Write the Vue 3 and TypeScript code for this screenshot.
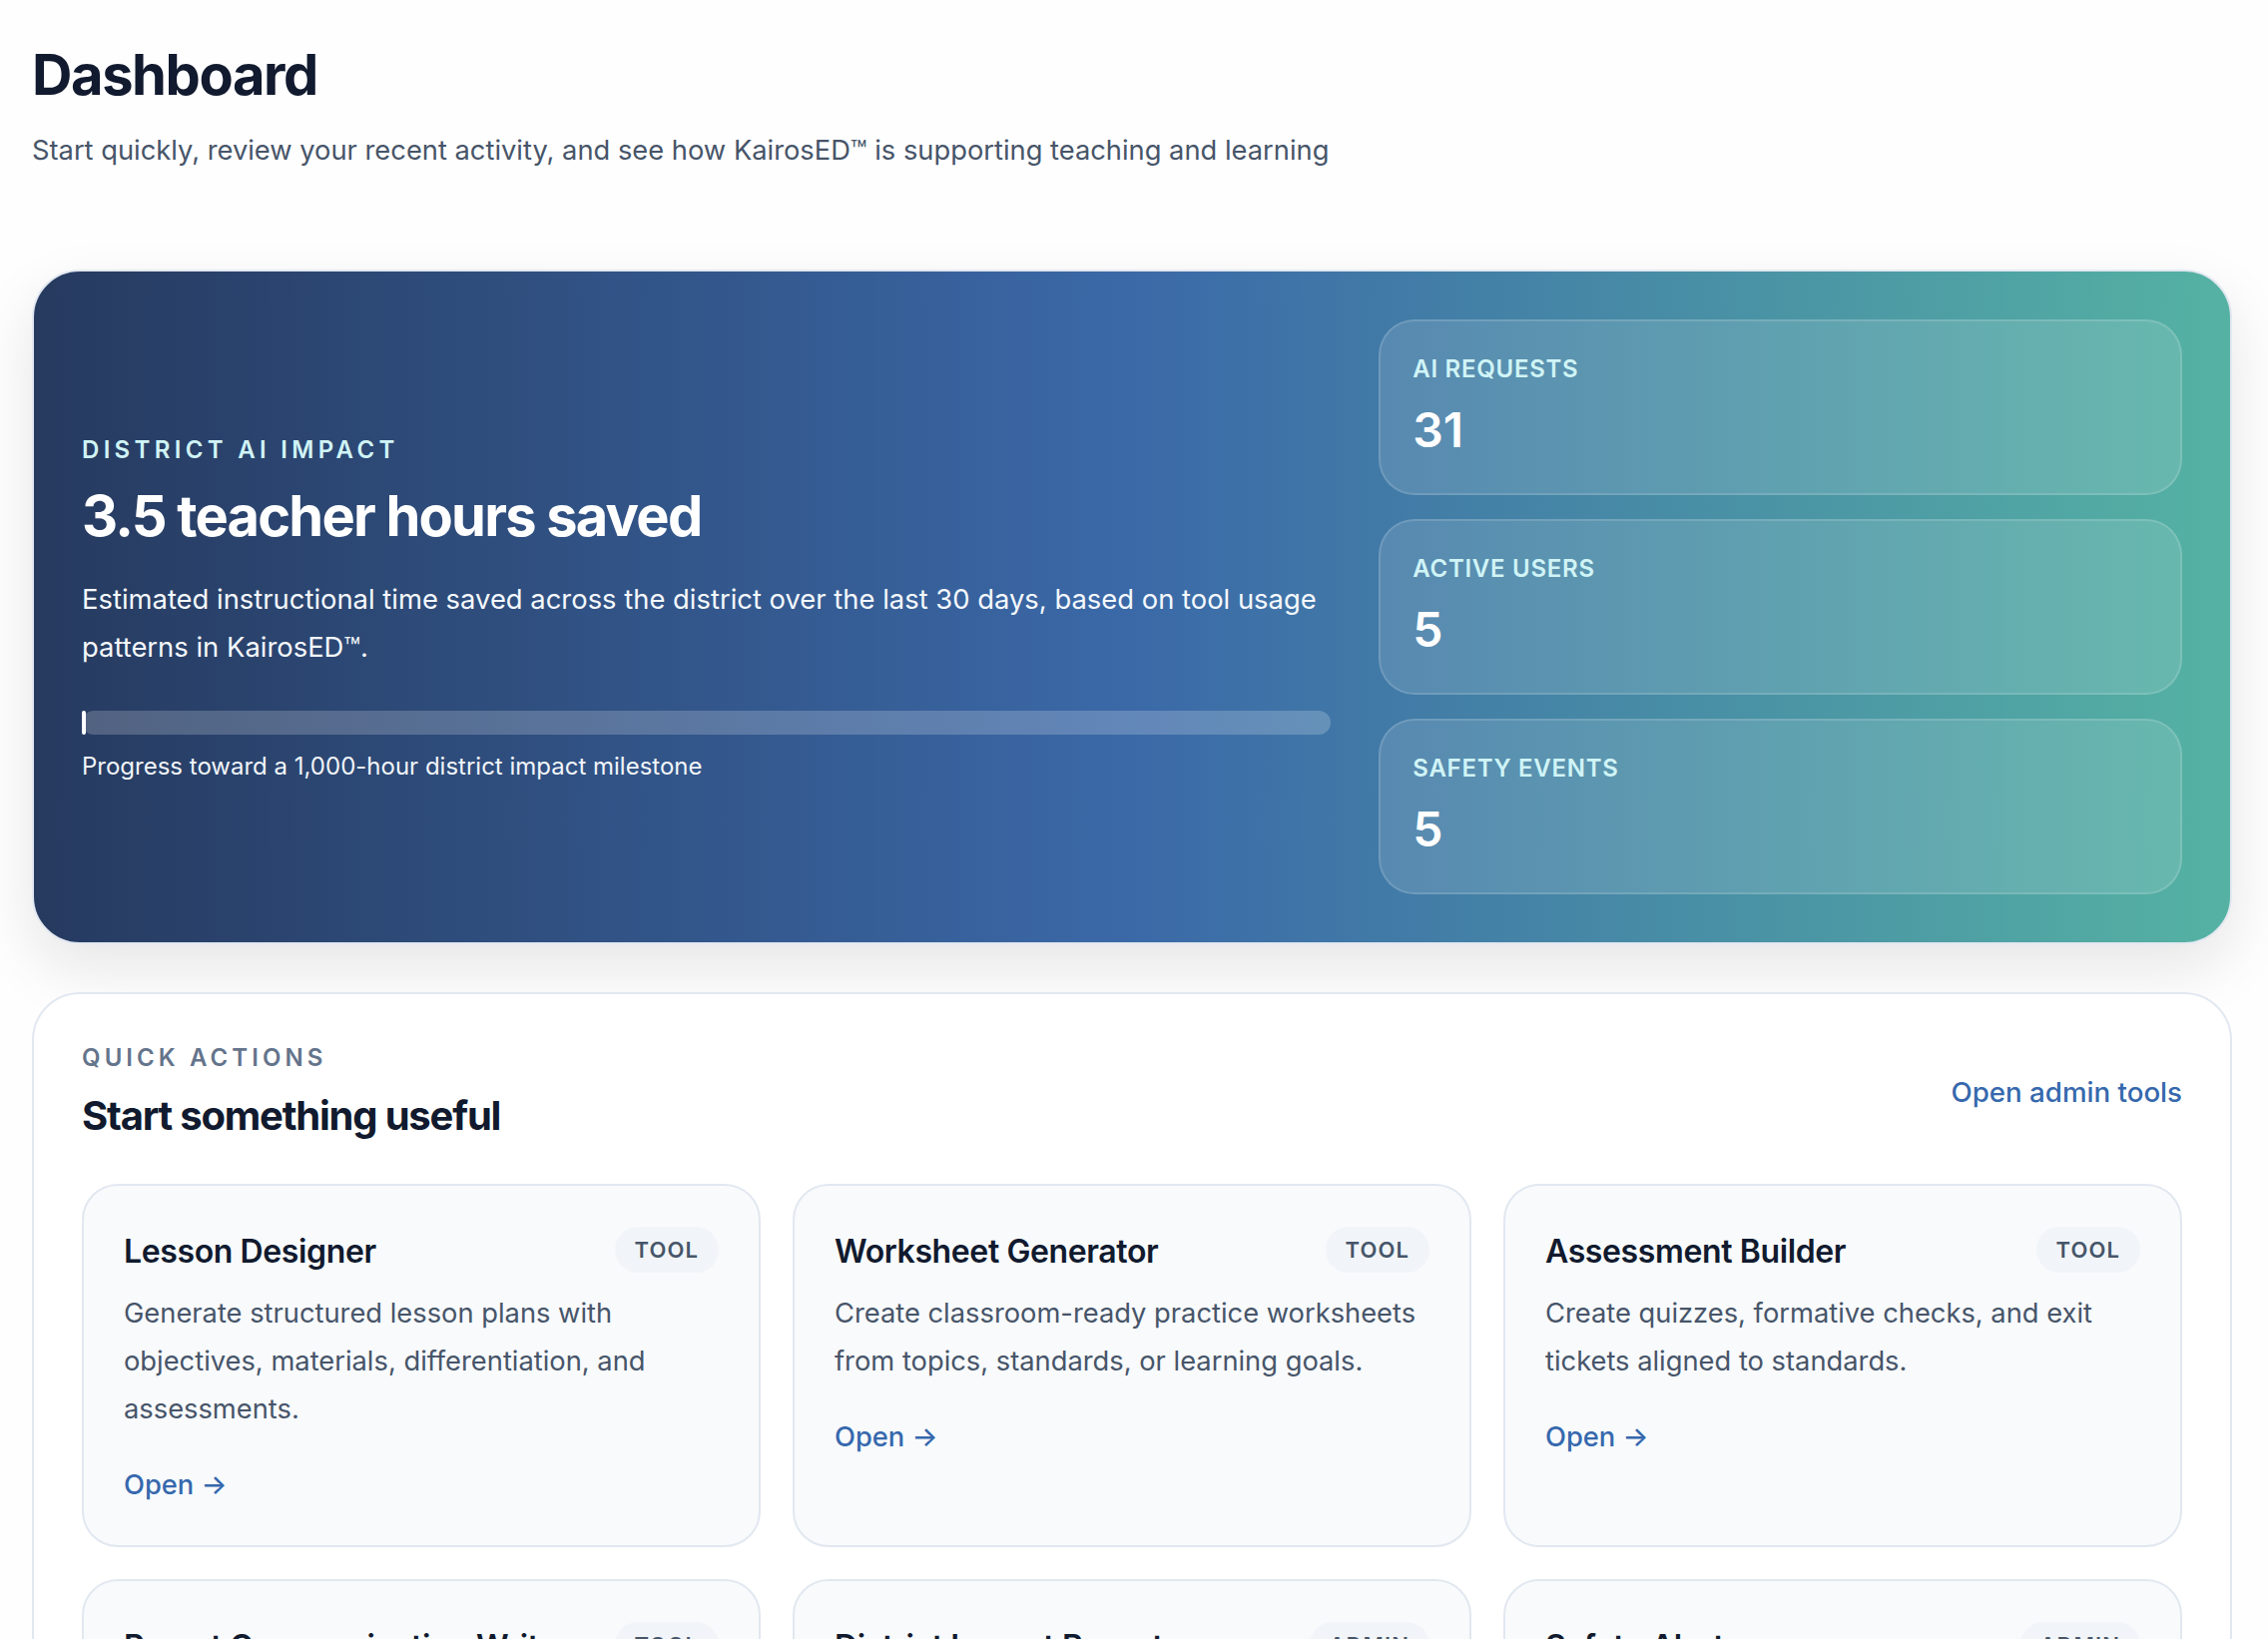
<script setup lang="ts">
interface Action { title: string; tag: string; text: string }
const stats = [
  { label: 'AI REQUESTS', value: '31' },
  { label: 'ACTIVE USERS', value: '5' },
  { label: 'SAFETY EVENTS', value: '5' },
]
const actions: Action[] = [
  { title: 'Lesson Designer', tag: 'TOOL', text: 'Generate structured lesson plans with objectives, materials, differentiation, and assessments.' },
  { title: 'Worksheet Generator', tag: 'TOOL', text: 'Create classroom-ready practice worksheets from topics, standards, or learning goals.' },
  { title: 'Assessment Builder', tag: 'TOOL', text: 'Create quizzes, formative checks, and exit tickets aligned to standards.' },
  { title: 'Parent Communication Writer', tag: 'TOOL', text: 'Draft clear, family-friendly messages and updates for parents.' },
  { title: 'District Impact Report', tag: 'ADMIN', text: 'Review district usage and estimated instructional time saved.' },
  { title: 'Safety Alerts', tag: 'ADMIN', text: 'Review flagged activity and safety events across the district.' },
]
</script>

<template>
  <div class="page">
    <header class="head">
      <h1>Dashboard</h1>
      <p>Start quickly, review your recent activity, and see how KairosED™ is supporting teaching and learning</p>
    </header>

    <section class="hero">
      <div class="hero-main">
        <div class="hero-eyebrow">DISTRICT AI IMPACT</div>
        <h2>3.5 teacher hours saved</h2>
        <p class="hero-text">Estimated instructional time saved across the district over the last 30 days, based on tool usage patterns in KairosED™.</p>
        <div class="bar"><div class="bar-fill"></div></div>
        <div class="bar-caption">Progress toward a 1,000-hour district impact milestone</div>
      </div>
      <div class="stats">
        <div v-for="s in stats" :key="s.label" class="stat">
          <div class="stat-label">{{ s.label }}</div>
          <div class="stat-value">{{ s.value }}</div>
        </div>
      </div>
    </section>

    <section class="panel">
      <div class="panel-head">
        <div>
          <div class="panel-eyebrow">QUICK ACTIONS</div>
          <h3>Start something useful</h3>
        </div>
        <a class="admin-link">Open admin tools</a>
      </div>
      <div class="grid">
        <article v-for="a in actions" :key="a.title" class="card">
          <div class="card-top">
            <h4>{{ a.title }}</h4>
            <span class="tag">{{ a.tag }}</span>
          </div>
          <p>{{ a.text }}</p>
          <a class="open">Open →</a>
        </article>
      </div>
    </section>
  </div>
</template>

<style>
html, body { margin: 0; background: #fff; }
</style>

<style scoped>
.page {
  box-sizing: border-box;
  height: 1642px;
  overflow: hidden;
  padding: 32px 36px 0 32px;
  font-family: Inter, "Liberation Sans", sans-serif;
  background: #fefefe;
}
.head { height: 231px; }
h1 {
  margin: 7px 0 0;
  font-size: 56px;
  line-height: 72px;
  font-weight: 700;
  letter-spacing: -0.025em;
  color: #111a2e;
}
.head p {
  margin: 18px 0 0;
  font-size: 27.3px;
  line-height: 44px;
  color: #475569;
}
.hero {
  box-sizing: border-box;
  display: grid;
  grid-template-columns: 1.555fr 1fr;
  gap: 48px;
  align-items: center;
  padding: 48px;
  border: 2px solid #e2e8f0;
  border-radius: 48px;
  background: linear-gradient(90deg, #263a5f 0%, #3b69a8 50%, #55b2a3 100%);
  box-shadow: 0 24px 60px rgba(15, 23, 42, 0.1);
  color: #fff;
}
.hero-main { padding-top: 5px; }
.hero-eyebrow {
  font-size: 24px;
  line-height: 32px;
  font-weight: 600;
  letter-spacing: 0.18em;
  color: #d0f4f6;
}
.hero h2 {
  margin: 12px 0 0;
  font-size: 56px;
  line-height: 76px;
  font-weight: 700;
  letter-spacing: -0.032em;
}
.hero-text {
  margin: 21px 0 0;
  font-size: 27.4px;
  line-height: 48px;
  color: #f4f8fc;
}
.bar {
  margin-top: 40px;
  height: 24px;
  border-radius: 12px;
  background: rgba(255, 255, 255, 0.2);
}
.bar-fill { width: 4px; height: 100%; border-radius: 2px; background: #fff; }
.bar-caption {
  margin-top: 14px;
  font-size: 24px;
  line-height: 36px;
  color: #f1f5f9;
}
.stats { display: flex; flex-direction: column; gap: 24px; }
.stat {
  box-sizing: border-box;
  height: 176px;
  padding: 32px;
  border: 2px solid rgba(255, 255, 255, 0.14);
  border-radius: 36px;
  background: rgba(255, 255, 255, 0.12);
}
.stat-label {
  font-size: 24px;
  line-height: 32px;
  font-weight: 600;
  letter-spacing: 0.03em;
  color: #d0f4f6;
}
.stat-value {
  margin-top: 15px;
  font-size: 48px;
  line-height: 60px;
  font-weight: 600;
}
.panel {
  box-sizing: border-box;
  margin-top: 48px;
  padding: 48px;
  border: 2px solid #e2e8f0;
  border-radius: 48px;
  background: #fff;
}
.panel-head {
  display: flex;
  justify-content: space-between;
  align-items: center;
  margin-bottom: 43px;
}
.panel-eyebrow {
  font-size: 24px;
  line-height: 32px;
  font-weight: 600;
  letter-spacing: 0.17em;
  color: #64748b;
}
h3 {
  margin: 17px 0 0;
  font-size: 40px;
  line-height: 50px;
  font-weight: 700;
  letter-spacing: -0.03em;
  color: #111a2e;
}
.admin-link {
  font-size: 27.7px;
  font-weight: 500;
  color: #3668ad;
}
.grid {
  display: grid;
  grid-template-columns: repeat(3, 1fr);
  gap: 32px;
}
.card {
  box-sizing: border-box;
  height: 364px;
  padding: 41px 40px 40px;
  border: 2px solid #e2e8f0;
  border-radius: 36px;
  background: #f8fafc;
}
.card-top {
  display: flex;
  justify-content: space-between;
  align-items: center;
  gap: 16px;
}
h4 {
  margin: 0;
  padding-top: 3px;
  font-size: 32px;
  line-height: 40px;
  font-weight: 600;
  letter-spacing: -0.012em;
  color: #111a2e;
}
.tag {
  padding: 0 20px;
  height: 46px;
  border-radius: 23px;
  font-size: 22px;
  line-height: 46px;
  font-weight: 600;
  letter-spacing: 0.05em;
  color: #475569;
  background: #f1f5f9;
}
.card p {
  margin: 17px 0 0;
  font-size: 27.3px;
  line-height: 48px;
  color: #475569;
}
.open {
  display: block;
  margin-top: 28px;
  font-size: 27.3px;
  line-height: 48px;
  font-weight: 500;
  color: #3668ad;
}
</style>
